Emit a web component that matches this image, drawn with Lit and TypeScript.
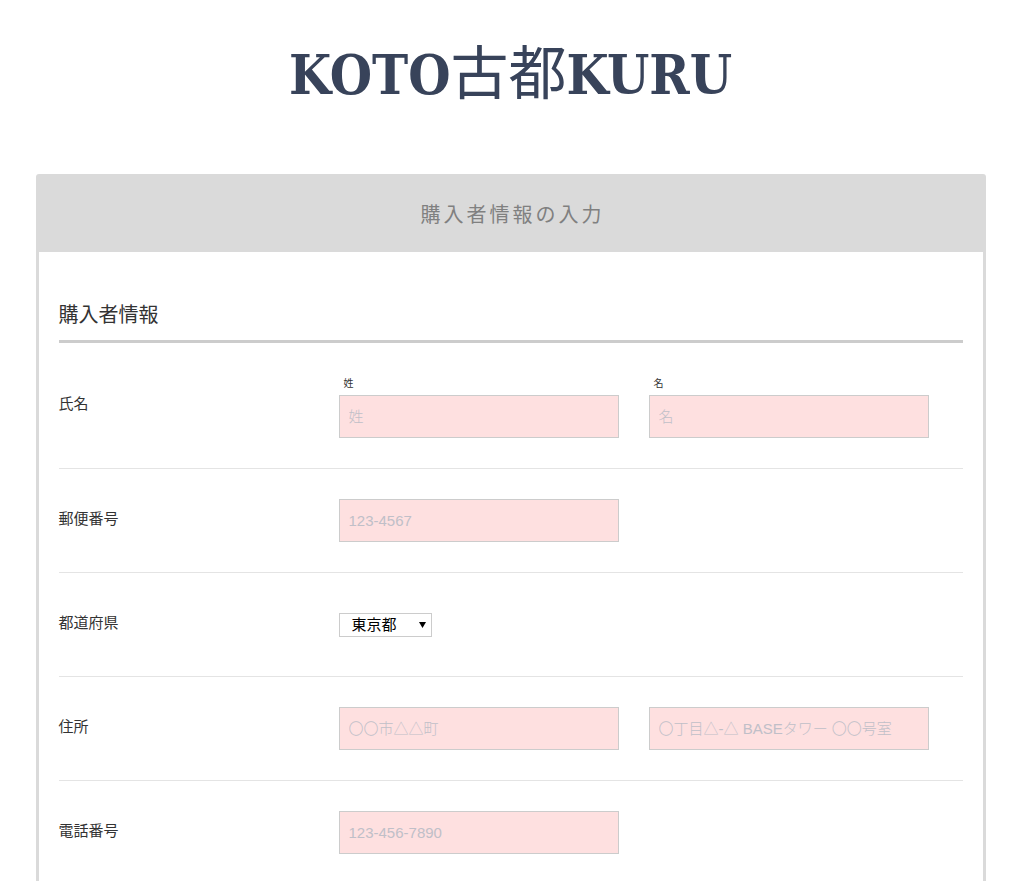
import { LitElement, html, css } from "lit";
import { customElement } from "lit/decorators.js";

interface Field {
  id: string;
  placeholder: string;
  name: string;
  caption?: string;
}

interface Row {
  title: string;
  fields: Field[];
}

const nameRow: Row = {
  title: "氏名",
  fields: [
    { id: "last-name", name: "姓", placeholder: "姓", caption: "姓" },
    { id: "first-name", name: "名", placeholder: "名", caption: "名" },
  ],
};

const zipRow: Row = {
  title: "郵便番号",
  fields: [{ id: "zip", name: "郵便番号", placeholder: "123-4567" }],
};

const addressRow: Row = {
  title: "住所",
  fields: [
    { id: "address", name: "住所", placeholder: "〇〇市△△町" },
    { id: "address2", name: "住所", placeholder: "〇丁目△-△ BASEタワー 〇〇号室" },
  ],
};

const phoneRow: Row = {
  title: "電話番号",
  fields: [{ id: "phone", name: "電話番号", placeholder: "123-456-7890" }],
};

@customElement("app-root")
export class AppRoot extends LitElement {
  static styles = css`
    :host {
      display: flex;
      flex-direction: column;
      min-height: 100vh;
      background: #fff;
      color: #333;
      font-family: "Liberation Sans", "Noto Sans CJK JP", sans-serif;
      font-size: 15px;
      line-height: 22px;
    }
    * {
      box-sizing: border-box;
    }
    .logo {
      margin: 0;
      padding: 35px 20px 59px;
      text-align: center;
      color: #38435a;
      font-family: "DejaVu Serif Condensed", "Noto Sans CJK JP", serif;
      font-size: 54px;
      font-weight: 700;
      line-height: 80px;
    }
    .logo a {
      color: inherit;
      text-decoration: none;
    }
    .kanji {
      font-family: "Noto Sans CJK JP", sans-serif;
      font-size: 58px;
      font-weight: 400;
      line-height: 60px;
    }
    .panel {
      flex: 1;
      width: calc(100% - 40px);
      max-width: 950px;
      margin: 0 auto;
      border: solid #dadada;
      border-width: 0 3px;
      border-radius: 3px 3px 0 0;
    }
    .banner {
      margin: 0;
      padding: 26px 20px 22px 24px;
      background: #dadada;
      color: #808080;
      text-align: center;
      font-size: 20px;
      font-weight: 400;
      line-height: 30px;
      letter-spacing: 3px;
    }
    .body {
      padding: 48px 20px 0;
    }
    .section {
      margin: 0;
      padding-bottom: 10px;
      border-bottom: 3px solid #ccc;
      color: #333;
      font-size: 20px;
      font-weight: 400;
      line-height: 30px;
    }
    .row {
      display: grid;
      grid-template-columns: 280px 1fr;
      align-items: center;
      padding: 30px 0;
      border-bottom: 1px solid #e4e4e4;
    }
    .row:last-child {
      border-bottom: 0;
      padding-bottom: 20px;
    }
    .title {
      padding-bottom: 4px;
    }
    .fields {
      display: flex;
      flex-wrap: wrap;
      align-items: center;
      gap: 30px;
      min-height: 43px;
    }
    .field {
      display: flex;
      flex-direction: column;
      width: 280px;
    }
    .caption {
      padding-left: 5px;
      font-size: 10px;
    }
    .input {
      width: 100%;
      height: 43px;
      margin: 0;
      padding: 0 9px;
      border: 1px solid #ccc;
      border-radius: 0;
      background: #fee0e0;
      color: #333;
      font: inherit;
    }
    .input::placeholder {
      color: #c0bfc8;
      font-weight: 300;
      opacity: 1;
    }
    .picker {
      position: relative;
      display: flex;
    }
    .select {
      appearance: none;
      height: 24px;
      margin: 0;
      padding: 0 33px 0 12px;
      border: 1px solid #ccc;
      border-radius: 0;
      background: #fff;
      color: #000;
      font: inherit;
    }
    .arrow {
      position: absolute;
      top: 9px;
      right: 6px;
      width: 7px;
      height: 6px;
      pointer-events: none;
    }
  `;

  private renderRow(row: Row) {
    return html`
      <div class="row">
        <label class="title" for=${row.fields[0].id}>${row.title}</label>
        <div class="fields">
          ${row.fields.map(
            (f) => html`
              <div class="field">
                ${f.caption ? html`<label class="caption" for=${f.id}>${f.caption}</label>` : ""}
                <input class="input" id=${f.id} type="text" aria-label=${f.name} placeholder=${f.placeholder} />
              </div>
            `,
          )}
        </div>
      </div>
    `;
  }

  render() {
    return html`
      <h1 class="logo"><a href="#">KOTO<span class="kanji">古都</span>KURU</a></h1>
      <main class="panel">
        <h2 class="banner">購入者情報の入力</h2>
        <form class="body">
          <h3 class="section">購入者情報</h3>
          ${this.renderRow(nameRow)} ${this.renderRow(zipRow)}
          <div class="row">
            <label class="title" for="prefecture">都道府県</label>
            <div class="fields">
              <div class="picker">
                <select class="select" id="prefecture">
                  <option>東京都</option>
                </select>
                <svg class="arrow" viewBox="0 0 7 6" aria-hidden="true">
                  <path d="M0 0h7L3.5 6z" fill="#000" />
                </svg>
              </div>
            </div>
          </div>
          ${this.renderRow(addressRow)} ${this.renderRow(phoneRow)}
        </form>
      </main>
    `;
  }
}
